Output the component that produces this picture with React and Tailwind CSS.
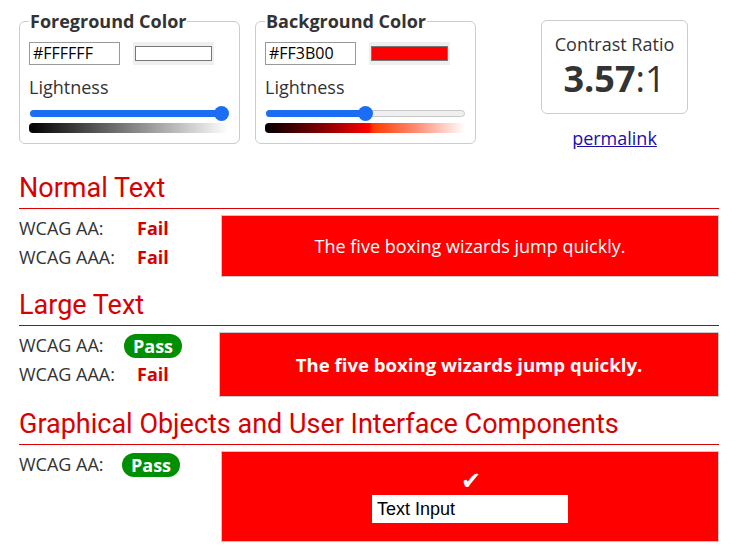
import React from 'react';

const sans = { fontFamily: '"Open Sans", "Liberation Sans", sans-serif' };

function ColorPanel({ title, hex, swatch, filled, gradient }) {
  return (
    <fieldset className="w-[221px] h-[134px] border border-[#cccccc] rounded-md px-[9px] pb-2">
      <legend className="text-[18px] font-bold text-[#333] leading-[22px] px-[1px]">{title}</legend>
      <div className="flex items-center gap-[13px] mt-[10px]">
        <div className="w-[91px] h-[23px] border border-[#999] px-[3px] text-[16px] leading-[21px] text-black">{hex}</div>
        <div className="w-[81px] h-[23px] bg-[#efefef] px-[2px] py-[4px]">
          <div className="w-full h-full border border-[#777]" style={{ background: swatch }} />
        </div>
      </div>
      <div className="text-[18px] text-[#333] mt-[11px] leading-[22px]">Lightness</div>
      <div className="relative h-[16px] mt-[7px] w-[200px]">
        <div className="absolute left-[1px] right-0 top-[5px] h-[7px] rounded-full bg-[#efefef] border border-[#c8c8c8]" />
        <div className="absolute left-[1px] top-[5px] h-[7px] rounded-full bg-[#1b6ef3]" style={{ width: filled }} />
        <div className="absolute top-[1px] w-[15px] h-[15px] rounded-full bg-[#1b6ef3]" style={{ left: `calc(${filled} - 7px)` }} />
      </div>
      <div className="h-[10px] w-[200px] rounded-l-sm mt-[2px]" style={{ background: gradient }} />
    </fieldset>
  );
}

function Status({ pass }) {
  if (pass) {
    return (
      <span className="inline-flex items-center h-[24px] px-[9px] rounded-full bg-[#008f00] text-white font-bold text-[18px] leading-none">Pass</span>
    );
  }
  return <span className="ml-[13px] text-[#d40000] font-bold text-[18px]">Fail</span>;
}

function Row({ label, pass, w = 105 }) {
  return (
    <div className="flex items-center h-[29px]">
      <span className="text-[18px] text-[#333]" style={{ width: w }}>{label}</span>
      <Status pass={pass} />
    </div>
  );
}

function Section({ title, line, children, sample, h, left }) {
  return (
    <section>
      <h2 className="text-[27px] leading-[32px] pb-[4px] text-[#d80000] border-b" style={{ fontFamily: 'Roboto, "Open Sans", sans-serif', borderColor: line }}>
        {title}
      </h2>
      <div className="flex mt-[6px]">
        <div className="mt-[-1px]" style={{ width: left }}>{children}</div>
        <div className="flex-1 bg-[#ff0000] border border-[#c8c8c8]" style={{ height: h }}>{sample}</div>
      </div>
    </section>
  );
}

export default function App() {
  return (
    <div className="w-[737px] h-[557px] bg-white pl-[19px] pr-[18px] overflow-hidden" style={sans}>
      <div className="flex pt-[10px]">
        <ColorPanel
          title="Foreground Color"
          hex="#FFFFFF"
          swatch="#ffffff"
          filled="96%"
          gradient="linear-gradient(to right, #000000, #ffffff)"
        />
        <div className="w-[15px]" />
        <ColorPanel
          title="Background Color"
          hex="#FF3B00"
          swatch="#ff0000"
          filled="50%"
          gradient="linear-gradient(to right, #000000, #8a0000 30%, #ff0000 52%, #ff3b00 54%, #ff8a70 75%, #ffffff)"
        />
        <div className="ml-[65px] mt-[10px] flex flex-col items-center">
          <div className="w-[147px] h-[94px] border border-[#cccccc] rounded-md flex flex-col items-center pt-[12px]">
            <div className="text-[18px] text-[#333] leading-[22px]">Contrast Ratio</div>
            <div className="text-[36px] text-[#333] leading-[44px] mt-[2px]">
              <span className="font-bold">3.57</span>:1
            </div>
          </div>
          <a href="#" className="mt-[12px] text-[18px] text-[#1a0dab] underline leading-[24px]">permalink</a>
        </div>
      </div>

      <div className="mt-[22px] w-[700px]">
        <Section
          title="Normal Text"
          line="#dd0000"
          h={62}
          left={202}
          sample={
            <div className="h-full flex items-center justify-center text-white text-[18px]">The five boxing wizards jump quickly.</div>
          }
        >
          <Row label="WCAG AA:" pass={false} />
          <Row label="WCAG AAA:" pass={false} />
        </Section>

        <div className="mt-[12px]">
          <Section
            title="Large Text"
            line="#b80000"
            h={65}
            left={200}
            sample={
              <div className="h-full flex items-center justify-center text-white text-[18.6px] font-bold">The five boxing wizards jump quickly.</div>
            }
          >
            <Row label="WCAG AA:" pass />
            <Row label="WCAG AAA:" pass={false} />
          </Section>
        </div>

        <div className="mt-[11px]">
          <Section
            title="Graphical Objects and User Interface Components"
            line="#dd0000"
            h={91}
            left={202}
            sample={
              <div className="h-full flex flex-col items-center pt-[15px]">
                <span className="text-white text-[24px] leading-[28px] ml-[2px]" style={{ fontFamily: '"DejaVu Sans", sans-serif' }}>✔</span>
                <div className="mt-[0px] w-[196px] h-[28px] bg-white px-[5px] text-[18px] leading-[28px] text-black" style={{ fontFamily: '"Liberation Sans", Arial, sans-serif' }}>Text Input</div>
              </div>
            }
          >
            <Row label="WCAG AA:" pass w={103} />
          </Section>
        </div>
      </div>
    </div>
  );
}
